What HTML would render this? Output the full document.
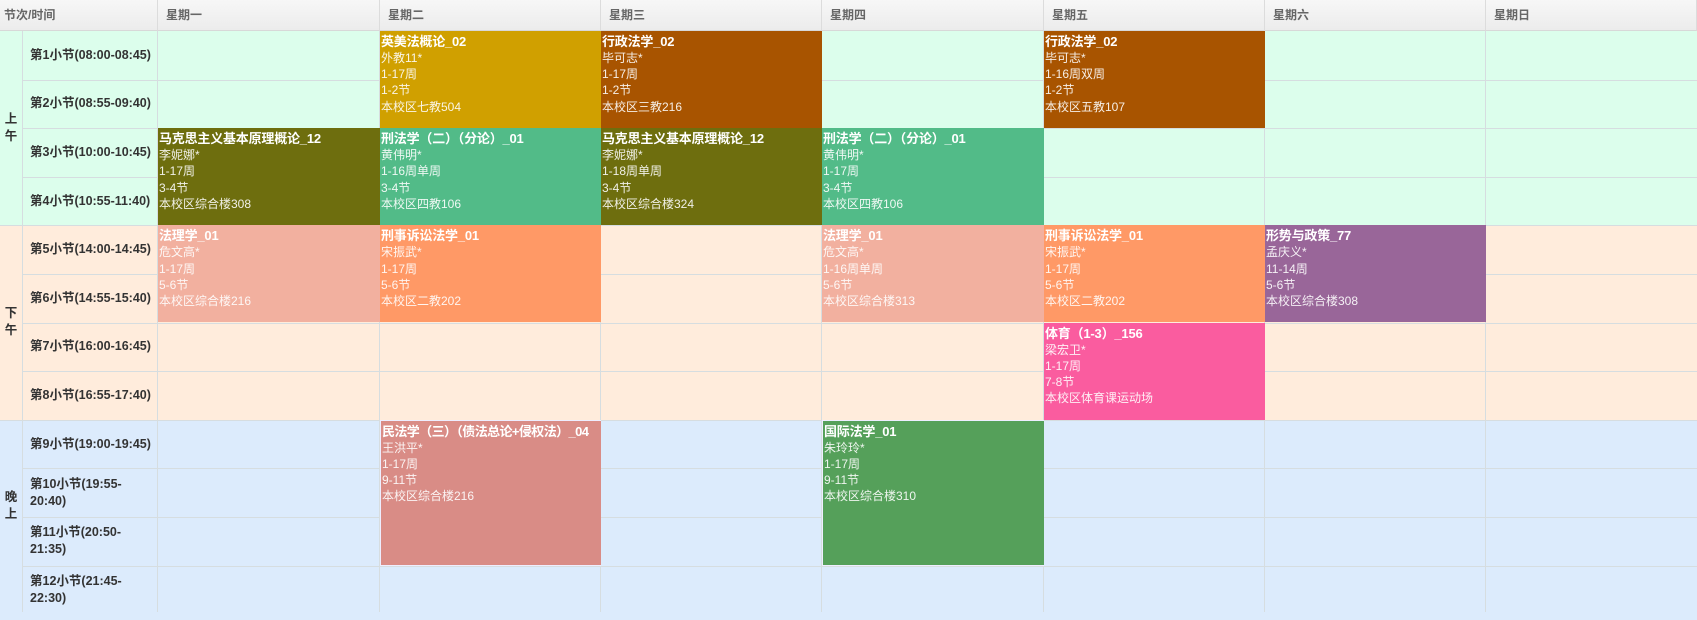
<!DOCTYPE html>
<html><head><meta charset="utf-8"><style>
*{margin:0;padding:0;box-sizing:border-box}
body{width:1697px;height:612px;overflow:hidden;position:relative;background:#fff;font-family:"Liberation Sans","Noto Sans CJK SC",sans-serif}
.a{position:absolute}
.hd{position:absolute;top:0;height:31px;background:linear-gradient(#f7f7f7,#ececec);border-right:1px solid #dcdcdc;border-bottom:1px solid #d8d8d8;color:#666;font-size:12px;font-weight:bold;line-height:30px;padding-left:8px}
.hl{position:absolute;left:22px;width:1675px;height:1px;background:#d6dde0}
.vl{position:absolute;top:31px;height:581px;width:1px;background:#d6dde0}
.lb{position:absolute;left:22px;width:136px;font-size:12.5px;font-weight:bold;color:#333;padding-left:8px;line-height:17px;display:flex;align-items:center}
.sec{position:absolute;left:0;width:22px;font-size:12.5px;font-weight:bold;color:#333;display:flex;align-items:center;justify-content:center;text-align:center;line-height:17px}
.b{position:absolute;color:#fff;font-size:12px;line-height:16.2px;padding:2px 0 0 1px;overflow:hidden;white-space:nowrap}
.b b{font-size:13px;display:block;line-height:17px;letter-spacing:-0.2px}
.b span{display:block;opacity:.9}
</style></head><body>
<div class="a" style="left:0;top:31px;width:1697px;height:194.4px;background:#dcfeec"></div>
<div class="a" style="left:0;top:225.4px;width:1697px;height:194.4px;background:#ffecdc"></div>
<div class="a" style="left:0;top:419.8px;width:1697px;height:200px;background:#dcebfc"></div>

<div class="hd" style="left:0;width:158px;padding-left:4px">节次/时间</div>
<div class="hd" style="left:158px;width:222px">星期一</div>
<div class="hd" style="left:380px;width:221px">星期二</div>
<div class="hd" style="left:601px;width:221px">星期三</div>
<div class="hd" style="left:822px;width:222px">星期四</div>
<div class="hd" style="left:1044px;width:221px">星期五</div>
<div class="hd" style="left:1265px;width:221px">星期六</div>
<div class="hd" style="left:1486px;width:211px">星期日</div>

<div class="hl" style="top:79.6px"></div><div class="hl" style="top:128.2px"></div><div class="hl" style="top:176.8px"></div>
<div class="hl" style="top:225.4px;left:0;width:1697px"></div><div class="hl" style="top:274px"></div><div class="hl" style="top:322.6px"></div><div class="hl" style="top:371.2px"></div>
<div class="hl" style="top:419.8px;left:0;width:1697px"></div><div class="hl" style="top:468.4px"></div><div class="hl" style="top:517px"></div><div class="hl" style="top:565.6px"></div>
<div class="vl" style="left:22px"></div><div class="vl" style="left:157px"></div><div class="vl" style="left:379px"></div><div class="vl" style="left:600px"></div><div class="vl" style="left:821px"></div><div class="vl" style="left:1043px"></div><div class="vl" style="left:1264px"></div><div class="vl" style="left:1485px"></div>

<div class="sec" style="top:31px;height:194px">上<br>午</div>
<div class="sec" style="top:225px;height:194px">下<br>午</div>
<div class="sec" style="top:420px;height:192px;padding-bottom:20px">晚<br>上</div>

<div class="lb" style="top:31px;height:48.6px">第1小节(08:00-08:45)</div>
<div class="lb" style="top:79.6px;height:48.6px">第2小节(08:55-09:40)</div>
<div class="lb" style="top:128.2px;height:48.6px">第3小节(10:00-10:45)</div>
<div class="lb" style="top:176.8px;height:48.6px">第4小节(10:55-11:40)</div>
<div class="lb" style="top:225.4px;height:48.6px">第5小节(14:00-14:45)</div>
<div class="lb" style="top:274px;height:48.6px">第6小节(14:55-15:40)</div>
<div class="lb" style="top:322.6px;height:48.6px">第7小节(16:00-16:45)</div>
<div class="lb" style="top:371.2px;height:48.6px">第8小节(16:55-17:40)</div>
<div class="lb" style="top:419.8px;height:48.6px">第9小节(19:00-19:45)</div>
<div class="lb" style="top:468.4px;height:48.6px">第10小节(19:55-<br>20:40)</div>
<div class="lb" style="top:517px;height:48.6px">第11小节(20:50-<br>21:35)</div>
<div class="lb" style="top:565.6px;height:48.6px">第12小节(21:45-<br>22:30)</div>

<div class="b" style="left:380px;top:31px;width:221px;height:97px;background:#d0a000"><b>英美法概论_02</b><span>外教11*</span><span>1-17周</span><span>1-2节</span><span>本校区七教504</span></div>
<div class="b" style="left:601px;top:31px;width:221px;height:97px;background:#a85400"><b>行政法学_02</b><span>毕可志*</span><span>1-17周</span><span>1-2节</span><span>本校区三教216</span></div>
<div class="b" style="left:1044px;top:31px;width:221px;height:97px;background:#a85400"><b>行政法学_02</b><span>毕可志*</span><span>1-16周双周</span><span>1-2节</span><span>本校区五教107</span></div>

<div class="b" style="left:158px;top:128.2px;width:222px;height:97px;background:#6e6e0e"><b>马克思主义基本原理概论_12</b><span>李妮娜*</span><span>1-17周</span><span>3-4节</span><span>本校区综合楼308</span></div>
<div class="b" style="left:380px;top:128.2px;width:221px;height:97px;background:#52bb88"><b>刑法学（二）（分论）_01</b><span>黄伟明*</span><span>1-16周单周</span><span>3-4节</span><span>本校区四教106</span></div>
<div class="b" style="left:601px;top:128.2px;width:221px;height:97px;background:#6e6e0e"><b>马克思主义基本原理概论_12</b><span>李妮娜*</span><span>1-18周单周</span><span>3-4节</span><span>本校区综合楼324</span></div>
<div class="b" style="left:822px;top:128.2px;width:222px;height:97px;background:#52bb88"><b>刑法学（二）（分论）_01</b><span>黄伟明*</span><span>1-17周</span><span>3-4节</span><span>本校区四教106</span></div>

<div class="b" style="left:158px;top:225.4px;width:222px;height:97px;background:#f2b09f"><b>法理学_01</b><span>危文高*</span><span>1-17周</span><span>5-6节</span><span>本校区综合楼216</span></div>
<div class="b" style="left:380px;top:225.4px;width:221px;height:97px;background:#ff9966"><b>刑事诉讼法学_01</b><span>宋振武*</span><span>1-17周</span><span>5-6节</span><span>本校区二教202</span></div>
<div class="b" style="left:822px;top:225.4px;width:222px;height:97px;background:#f2b09f"><b>法理学_01</b><span>危文高*</span><span>1-16周单周</span><span>5-6节</span><span>本校区综合楼313</span></div>
<div class="b" style="left:1044px;top:225.4px;width:221px;height:97px;background:#ff9966"><b>刑事诉讼法学_01</b><span>宋振武*</span><span>1-17周</span><span>5-6节</span><span>本校区二教202</span></div>
<div class="b" style="left:1265px;top:225.4px;width:221px;height:97px;background:#996699"><b>形势与政策_77</b><span>孟庆义*</span><span>11-14周</span><span>5-6节</span><span>本校区综合楼308</span></div>
<div class="b" style="left:1044px;top:322.6px;width:221px;height:97px;background:#fa5c9f"><b>体育（1-3）_156</b><span>梁宏卫*</span><span>1-17周</span><span>7-8节</span><span>本校区体育课运动场</span></div>

<div class="b" style="left:380px;top:419.8px;width:221px;height:146px;background:#d98c86;border:1px solid #eef;border-width:1px 0 1px 1px"><b style="letter-spacing:-0.6px">民法学（三）（债法总论+侵权法）_04</b><span>王洪平*</span><span>1-17周</span><span>9-11节</span><span>本校区综合楼216</span></div>
<div class="b" style="left:822px;top:419.8px;width:222px;height:146px;background:#55a05a;border:1px solid #eef;border-width:1px 0 1px 1px"><b>国际法学_01</b><span>朱玲玲*</span><span>1-17周</span><span>9-11节</span><span>本校区综合楼310</span></div>
</body></html>
